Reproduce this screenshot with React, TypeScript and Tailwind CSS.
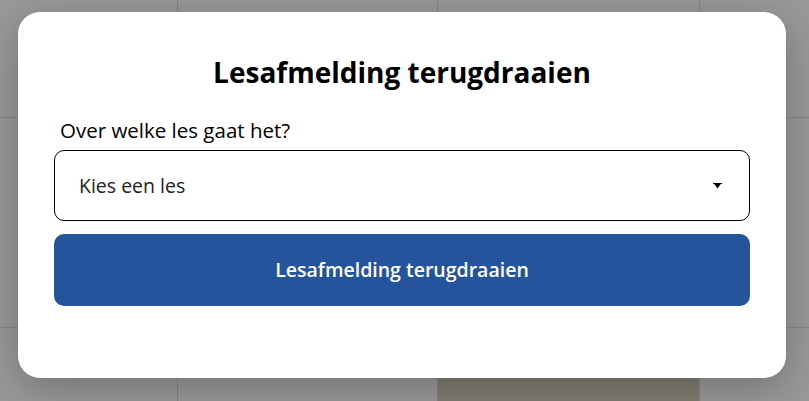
import React from "react";

export default function App() {
  return (
    <div
      className="relative h-[401px] w-full overflow-hidden bg-white"
      style={{ fontFamily: '"Open Sans", "Noto Sans", sans-serif' }}
    >
      <div className="grid h-full grid-cols-[178px_260px_262px_1fr] grid-rows-[118px_210px_1fr]">
        <div className="border-r border-b border-[#e0e0e0]" />
        <div className="border-r border-b border-[#e0e0e0]" />
        <div className="border-r border-b border-[#e0e0e0]" />
        <div className="border-b border-[#e0e0e0]" />
        <div className="border-r border-b border-[#e0e0e0]" />
        <div className="border-r border-b border-[#e0e0e0]" />
        <div className="border-r border-b border-[#e0e0e0]" />
        <div className="border-b border-[#e0e0e0]" />
        <div className="border-r border-[#e0e0e0]" />
        <div className="border-r border-[#e0e0e0]" />
        <div className="border-r border-[#e0e0e0] bg-[#d8d2bf]" />
        <div />
      </div>
      <div className="absolute inset-0 bg-black/40" />
      <div className="absolute left-[18px] top-[12px] flex h-[366px] w-[768px] flex-col rounded-[22px] bg-white px-[36px] pt-[44px] shadow-[0_10px_40px_rgba(0,0,0,0.25)]">
        <h1 className="text-center text-[28px] font-bold leading-[32px] text-black">
          Lesafmelding terugdraaien
        </h1>
        <label className="mt-[30px] pl-[6px] text-[20.5px] font-medium leading-[24px] text-black">
          Over welke les gaat het?
        </label>
        <div className="mt-[8px] flex h-[71px] items-center justify-between rounded-[10px] border border-black pl-[24px] pr-[27px]">
          <span className="text-[19.5px] text-[#222]">Kies een les</span>
          <svg width="9" height="6" viewBox="0 0 9 6">
            <rect x="0" y="0" width="9" height="1" fill="#000" />
            <path d="M0.5 0 L8.5 0 L4.5 5.5 Z" fill="#000" />
          </svg>
        </div>
        <button className="mt-[13px] flex h-[72px] w-full items-center justify-center rounded-[10px] bg-[#26549c] text-[19.5px] font-semibold text-white">
          Lesafmelding terugdraaien
        </button>
      </div>
    </div>
  );
}
